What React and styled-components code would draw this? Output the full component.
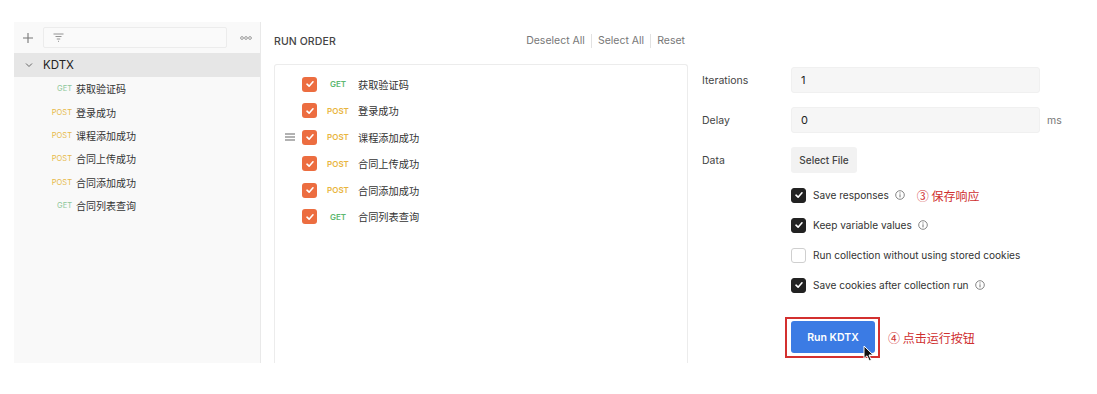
import React from "react";
import styled, { createGlobalStyle } from "styled-components";

const Global = createGlobalStyle`
  html, body { margin: 0; padding: 0; background: #fff; }
  body { font-family: Inter, "Noto Sans CJK SC", sans-serif; color: #333; }
`;

const Page = styled.div`
  width: 1097px;
  height: 394px;
  padding: 22px 0 0 14px;
  box-sizing: border-box;
  position: relative;
`;

const AppFrame = styled.div`
  display: flex;
  height: 341px;
`;

const Sidebar = styled.aside`
  width: 246px;
  background: #f9f9f9;
  border-right: 1px solid #e9e9e9;
  display: flex;
  flex-direction: column;
`;

const Toolbar = styled.div`
  height: 31px;
  display: flex;
  align-items: center;
  padding: 0 8px 0 8px;
  gap: 9px;
`;

const IconBtn = styled.div`
  width: 12px;
  display: flex;
  align-items: center;
  justify-content: center;
  color: #777;
`;

const Filter = styled.div`
  flex: 1;
  height: 19px;
  border: 1px solid #ececec;
  background: #fafafa;
  border-radius: 2px;
  display: flex;
  align-items: center;
  padding-left: 9px;
  margin-right: 4px;
`;

const CollectionRow = styled.div`
  height: 24px;
  background: #e6e6e6;
  display: flex;
  align-items: center;
  padding-left: 11px;
  gap: 10px;
  font-size: 11.5px;
  color: #222;
`;

const ReqRow = styled.div`
  height: 23.4px;
  display: flex;
  align-items: center;
  gap: 4px;
  font-size: 10px;
  color: #333;
`;

const SideMethod = styled.span`
  width: 58px;
  text-align: right;
  font-size: 7.5px;
  color: ${(p) => (p.$m === "GET" ? "#8dc79a" : "#e7b94a")};
  font-family: Inter, sans-serif;
`;

const Main = styled.main`
  flex: 1;
  display: flex;
  padding-left: 13px;
`;

const OrderCol = styled.section`
  width: 414px;
  display: flex;
  flex-direction: column;
`;

const OrderHeader = styled.div`
  height: 42px;
  display: flex;
  align-items: center;
  justify-content: space-between;
  padding-bottom: 4px;
  box-sizing: border-box;
`;

const Title = styled.div`
  font-size: 10.5px;
  font-weight: 500;
  color: #444;
  letter-spacing: 0.1px;
`;

const Links = styled.div`
  display: flex;
  align-items: center;
  font-size: 10.5px;
  color: #777;
  padding-right: 3px;
`;

const LinkItem = styled.span`
  padding: 0 6px;
  border-left: ${(p) => (p.$sep ? "1px solid #e2e2e2" : "none")};
  line-height: 14px;
  &:last-child { padding-right: 0; }
`;

const OrderPanel = styled.div`
  flex: 1;
  border: 1px solid #ececec;
  border-bottom: none;
  border-radius: 3px 3px 0 0;
  padding-top: 6px;
`;

const OrderRow = styled.div`
  height: 26.5px;
  display: flex;
  align-items: center;
`;

const Handle = styled.div`
  width: 27px;
  display: flex;
  justify-content: flex-end;
  padding-right: 7px;
  box-sizing: border-box;
  visibility: ${(p) => (p.$show ? "visible" : "hidden")};
`;

const OrangeBox = styled.div`
  width: 15px;
  height: 15px;
  border-radius: 3px;
  background: #ec6d40;
  display: flex;
  align-items: center;
  justify-content: center;
`;

const OrderMethod = styled.span`
  width: 24px;
  margin-left: 9px;
  text-align: center;
  font-size: 8px;
  font-weight: 600;
  color: ${(p) => (p.$m === "GET" ? "#5db870" : "#e9b53e")};
`;

const OrderName = styled.span`
  margin-left: 8px;
  font-size: 10.2px;
  color: #333;
`;

const Settings = styled.section`
  flex: 1;
  padding-left: 14px;
  display: flex;
  flex-direction: column;
  padding-top: 45px;
`;

const FieldRow = styled.div`
  display: flex;
  align-items: center;
  margin-bottom: ${(p) => (p.$last ? "7px" : "14px")};
`;

const Label = styled.div`
  width: 89px;
  font-size: 10.5px;
  color: #444;
`;

const Input = styled.div`
  width: 249px;
  height: 26px;
  box-sizing: border-box;
  background: #f6f6f6;
  border-radius: 3px;
  border: 1px solid #f0f0f0;
  display: flex;
  align-items: center;
  padding-left: 9px;
  font-size: 11px;
  color: #222;
`;

const Unit = styled.span`
  margin-left: 7px;
  font-size: 10.5px;
  color: #777;
`;

const FileBtn = styled.div`
  width: 66px;
  height: 26px;
  background: #f2f2f2;
  border-radius: 3px;
  display: flex;
  align-items: center;
  justify-content: center;
  font-size: 10px;
  font-weight: 500;
  color: #444;
`;

const Options = styled.div`
  padding-left: 89px;
  display: flex;
  flex-direction: column;
`;

const OptRow = styled.div`
  height: 30px;
  display: flex;
  align-items: center;
  font-size: 10.1px;
  color: #333;
`;

const DarkBox = styled.div`
  width: 15px;
  height: 15px;
  box-sizing: border-box;
  border-radius: 3px;
  background: ${(p) => (p.$on ? "#222" : "#fff")};
  border: 1px solid ${(p) => (p.$on ? "#222" : "#cfcfcf")};
  display: flex;
  align-items: center;
  justify-content: center;
  margin-right: 7px;
`;

const Info = styled.span`
  margin-left: 6px;
  display: inline-flex;
`;

const Note = styled.span`
  color: #cf2f2f;
  font-family: "Noto Sans CJK SC", sans-serif;
  font-size: 12px;
  margin-left: ${(p) => p.$gap}px;
`;

const RunArea = styled.div`
  padding-left: 83px;
  margin-top: 17px;
  display: flex;
  align-items: center;
`;

const Highlight = styled.div`
  position: relative;
  border: 2px solid #d3302f;
  padding: 2px 3px 3px 4px;
  box-sizing: border-box;
`;

const RunButton = styled.div`
  width: 84px;
  height: 32px;
  border-radius: 3px;
  background: #3b7be4;
  color: #fff;
  display: flex;
  align-items: center;
  justify-content: center;
  font-size: 10.5px;
  font-weight: 600;
`;

const Cursor = styled.svg`
  position: absolute;
  left: 76px;
  top: 26px;
`;

const Check = ({ size = 10 }) => (
  <svg width={size} height={size} viewBox="0 0 10 10">
    <path d="M2 5.2 L4.1 7.2 L8 2.8" fill="none" stroke="#fff" strokeWidth="1.6" strokeLinecap="round" strokeLinejoin="round" />
  </svg>
);

const InfoIcon = () => (
  <svg width="10" height="10" viewBox="0 0 10 10">
    <circle cx="5" cy="5" r="4.3" fill="none" stroke="#777" strokeWidth="0.9" />
    <line x1="5" y1="4.3" x2="5" y2="7.4" stroke="#777" strokeWidth="1" />
    <circle cx="5" cy="2.9" r="0.6" fill="#777" />
  </svg>
);

const requests = [
  ["GET", "获取验证码"],
  ["POST", "登录成功"],
  ["POST", "课程添加成功"],
  ["POST", "合同上传成功"],
  ["POST", "合同添加成功"],
  ["GET", "合同列表查询"],
];

export default function App() {
  return (
    <>
      <Global />
      <Page>
        <AppFrame>
          <Sidebar>
            <Toolbar>
              <IconBtn>
                <svg width="12" height="12" viewBox="0 0 12 12">
                  <path d="M6 1 V11 M1 6 H11" stroke="#777" strokeWidth="1.1" />
                </svg>
              </IconBtn>
              <Filter>
                <svg width="11" height="9" viewBox="0 0 11 9">
                  <path d="M0.5 1 H10.5 M2.5 3.5 H8.5 M3.8 6 H7.2 M5 8.3 H6" stroke="#888" strokeWidth="0.9" />
                </svg>
              </Filter>
              <IconBtn>
                <svg width="12" height="4" viewBox="0 0 12 4">
                  <circle cx="2" cy="2" r="1.4" fill="none" stroke="#888" strokeWidth="0.8" />
                  <circle cx="6" cy="2" r="1.4" fill="none" stroke="#888" strokeWidth="0.8" />
                  <circle cx="10" cy="2" r="1.4" fill="none" stroke="#888" strokeWidth="0.8" />
                </svg>
              </IconBtn>
            </Toolbar>
            <CollectionRow>
              <svg width="8" height="6" viewBox="0 0 8 6">
                <path d="M1 1.5 L4 4.5 L7 1.5" fill="none" stroke="#666" strokeWidth="1" />
              </svg>
              KDTX
            </CollectionRow>
            {requests.map(([m, n]) => (
              <ReqRow key={n}>
                <SideMethod $m={m}>{m}</SideMethod>
                <span>{n}</span>
              </ReqRow>
            ))}
          </Sidebar>
          <Main>
            <OrderCol>
              <OrderHeader>
                <Title>RUN ORDER</Title>
                <Links>
                  <LinkItem>Deselect All</LinkItem>
                  <LinkItem $sep>Select All</LinkItem>
                  <LinkItem $sep>Reset</LinkItem>
                </Links>
              </OrderHeader>
              <OrderPanel>
                {requests.map(([m, n], i) => (
                  <OrderRow key={n}>
                    <Handle $show={i === 2}>
                      <svg width="10" height="8" viewBox="0 0 10 8">
                        <path d="M0 1 H10 M0 4 H10 M0 7 H10" stroke="#666" strokeWidth="1.1" />
                      </svg>
                    </Handle>
                    <OrangeBox>
                      <Check />
                    </OrangeBox>
                    <OrderMethod $m={m}>{m}</OrderMethod>
                    <OrderName>{n}</OrderName>
                  </OrderRow>
                ))}
              </OrderPanel>
            </OrderCol>
            <Settings>
              <FieldRow>
                <Label>Iterations</Label>
                <Input>1</Input>
              </FieldRow>
              <FieldRow>
                <Label>Delay</Label>
                <Input>0</Input>
                <Unit>ms</Unit>
              </FieldRow>
              <FieldRow $last>
                <Label>Data</Label>
                <FileBtn>Select File</FileBtn>
              </FieldRow>
              <Options>
                <OptRow>
                  <DarkBox $on><Check /></DarkBox>
                  Save responses
                  <Info><InfoIcon /></Info>
                  <Note $gap={12}>③ 保存响应</Note>
                </OptRow>
                <OptRow>
                  <DarkBox $on><Check /></DarkBox>
                  Keep variable values
                  <Info><InfoIcon /></Info>
                </OptRow>
                <OptRow>
                  <DarkBox />
                  Run collection without using stored cookies
                </OptRow>
                <OptRow>
                  <DarkBox $on><Check /></DarkBox>
                  Save cookies after collection run
                  <Info><InfoIcon /></Info>
                </OptRow>
              </Options>
              <RunArea>
                <Highlight>
                  <RunButton>Run KDTX</RunButton>
                  <Cursor width="12" height="17" viewBox="0 0 12 17">
                    <path d="M1 1 L1 13.5 L4 10.8 L6.3 15.8 L8.3 14.9 L6 10 L10.2 10 Z" fill="#111" stroke="#fff" strokeWidth="1" strokeLinejoin="round" />
                  </Cursor>
                </Highlight>
                <Note $gap={8}>④ 点击运行按钮</Note>
              </RunArea>
            </Settings>
          </Main>
        </AppFrame>
      </Page>
    </>
  );
}
